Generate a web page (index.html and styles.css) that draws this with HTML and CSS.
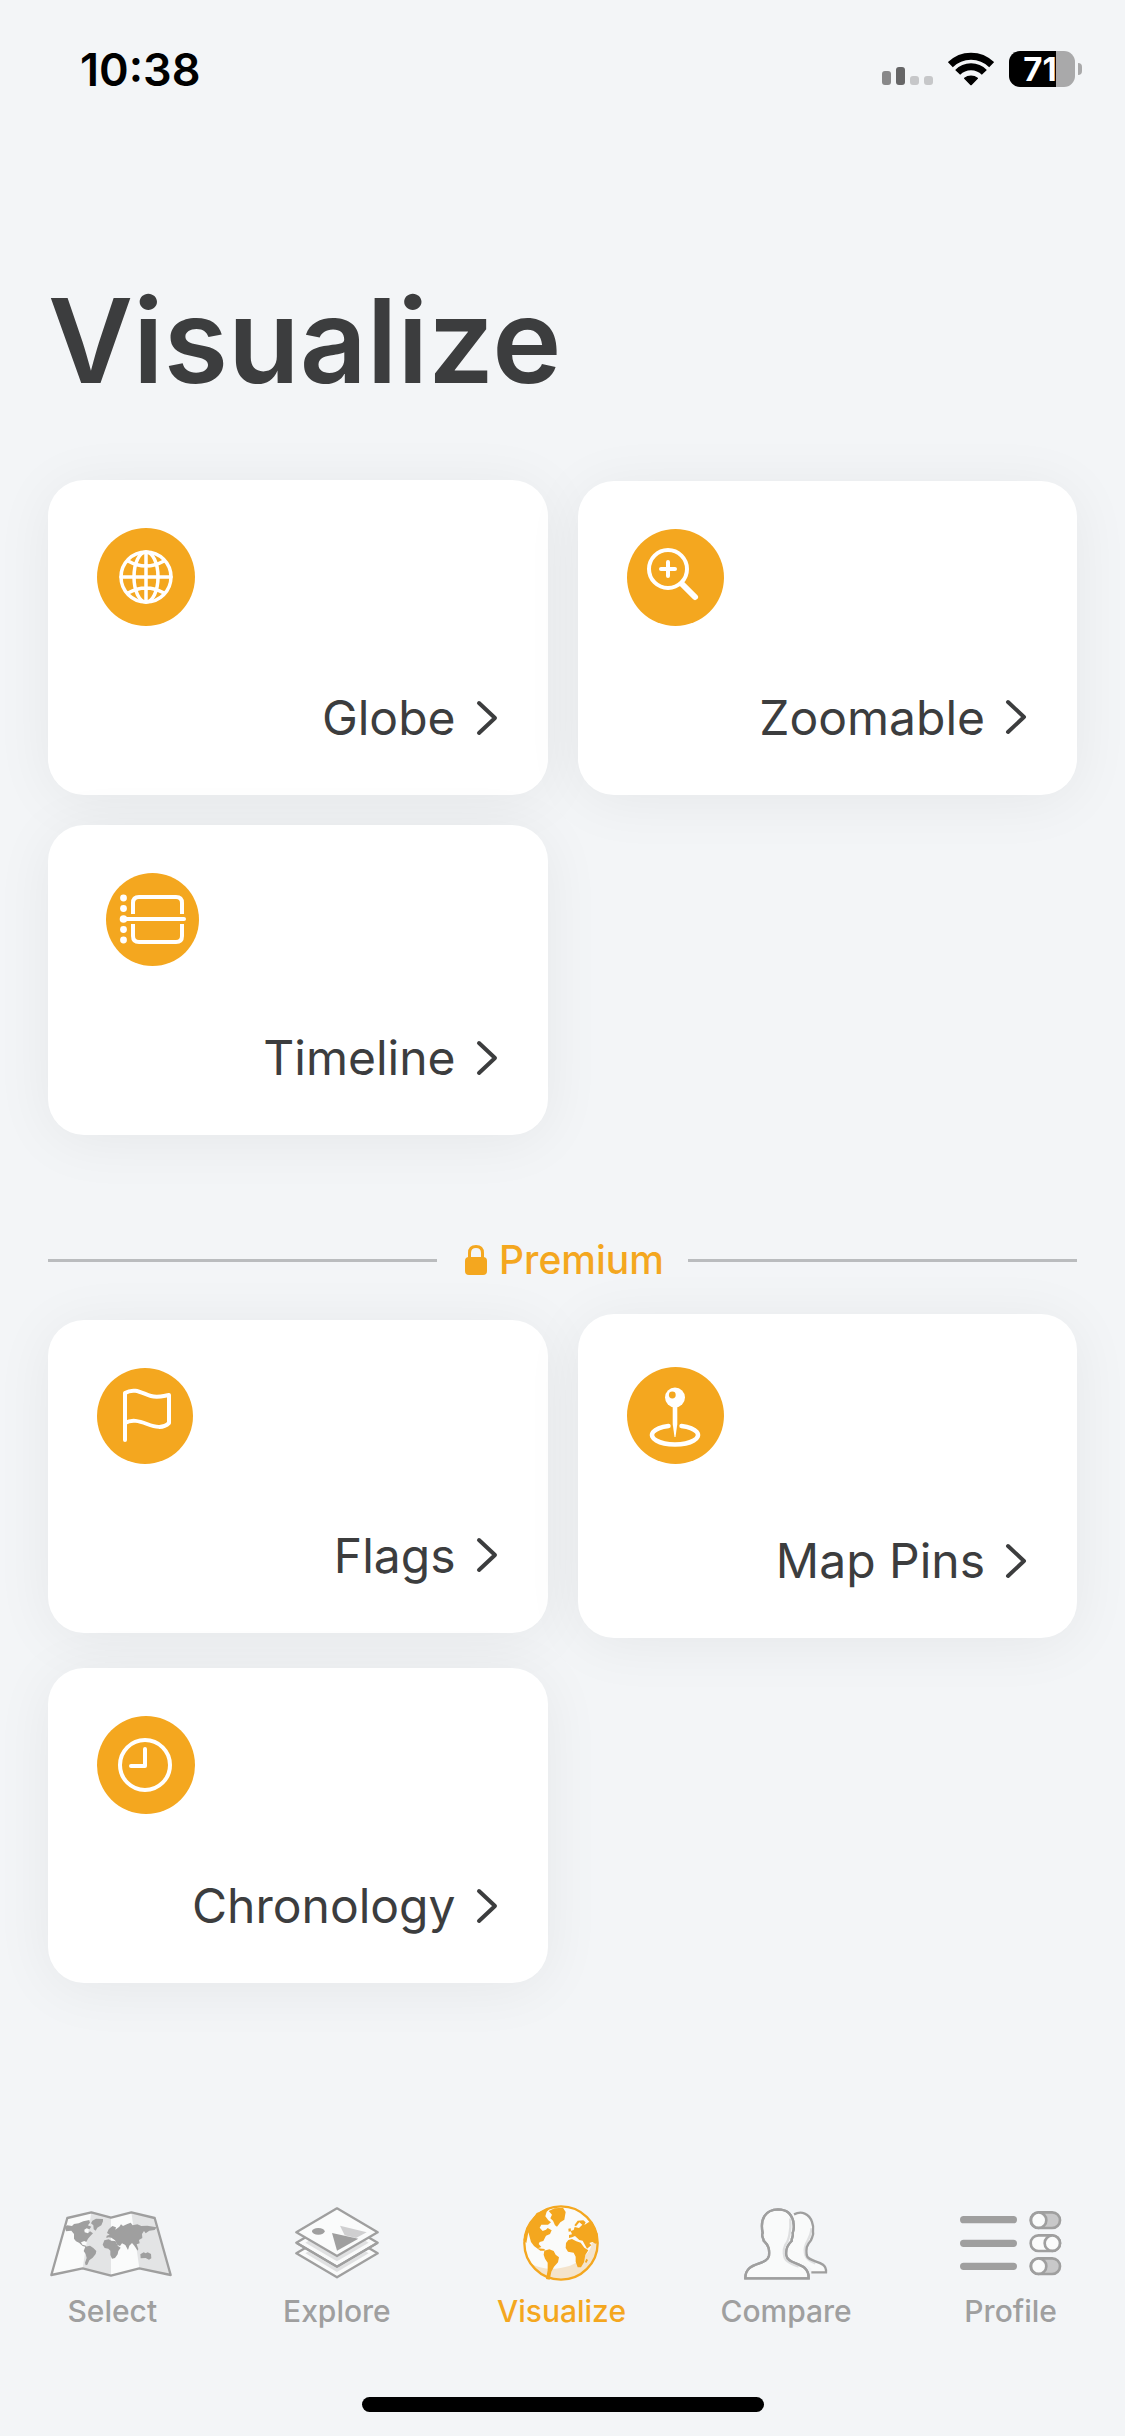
FILE: index.html
```html
<!DOCTYPE html>
<html lang="en">
<head>
    <meta charset="UTF-8">
    <meta name="viewport" content="width=device-width, initial-scale=1.0">
    <title>Visualize</title>
    <link rel="stylesheet" href="styles.css">
</head>
<body>
    <header class="status-bar">
        <span class="time">10:38</span>
        <div class="status-icons">
            <svg class="signal" viewBox="0 0 51 18" aria-hidden="true">
                <rect x="0" y="4" width="9" height="14" rx="3" fill="#888889"/>
                <rect x="14" y="0" width="9" height="18" rx="3" fill="#666667"/>
                <rect x="28" y="9" width="9" height="9" rx="3" fill="#c6c7c9"/>
                <rect x="42" y="9" width="9" height="9" rx="3" fill="#c6c7c9"/>
            </svg>
            <svg class="wifi" viewBox="264 65 138 102" aria-hidden="true">
                <path d="M271 103A88 88 0 0 1 395 103M293 126A56 56 0 0 1 373 126" fill="none" stroke="#000" stroke-width="21"/>
                <path d="M333 163L314 144A30 30 0 0 1 352 144Z" stroke="#000" stroke-width="4" stroke-linejoin="round"/>
            </svg>
            <div class="battery">
                <span class="battery-level">71</span>
                <span class="battery-cap"></span>
            </div>
        </div>
    </header>

    <main>
        <h1>Visualize</h1>

        <div class="cards">
            <a class="card" href="#globe">
                <svg class="card-icon" width="98" height="98" viewBox="0 0 98 98" aria-hidden="true">
                    <circle class="disc" cx="49" cy="49" r="49"/>
                    <g class="line" stroke-width="3.5">
                        <circle cx="49" cy="49" r="25"/>
                        <ellipse cx="49" cy="49" rx="12" ry="25"/>
                        <path d="M49 24V74M24 49H74M31 33Q49 43 67 33M31 65Q49 55 67 65"/>
                    </g>
                </svg>
                <span class="card-label">Globe
                    <svg class="chevron" viewBox="0 0 26 38" aria-hidden="true"><path d="M5 4L21 19L5 34"/></svg>
                </span>
            </a>
            <a class="card" href="#zoomable">
                <svg class="card-icon" width="97" height="97" viewBox="0 0 97 97" aria-hidden="true">
                    <circle class="disc" cx="48.5" cy="48.5" r="48.5"/>
                    <g class="line" stroke-width="4">
                        <circle cx="41" cy="40" r="19"/>
                        <path d="M34 40H48M41 33V47"/>
                        <path d="M55 55L68 68" stroke-width="6"/>
                    </g>
                </svg>
                <span class="card-label">Zoomable
                    <svg class="chevron" viewBox="0 0 26 38" aria-hidden="true"><path d="M5 4L21 19L5 34"/></svg>
                </span>
            </a>
            <a class="card" href="#timeline">
                <svg class="card-icon" width="102" height="93" viewBox="0 0 102 93" aria-hidden="true">
                    <circle class="disc" cx="55.5" cy="46.5" r="46.5"/>
                    <g class="dots">
                        <circle cx="26.5" cy="25" r="3.4"/>
                        <circle cx="26.5" cy="35.5" r="3.4"/>
                        <circle cx="26.5" cy="46" r="3.8"/>
                        <circle cx="26.5" cy="56.5" r="3.4"/>
                        <circle cx="26.5" cy="67" r="3.4"/>
                    </g>
                    <g class="line" stroke-width="4">
                        <path d="M27 46H87"/>
                        <path d="M36 41V30Q36 24 42 24H79Q85 24 85 30V41M36 51V63Q36 69 42 69H79Q85 69 85 63V51" stroke-linecap="butt"/>
                    </g>
                </svg>
                <span class="card-label">Timeline
                    <svg class="chevron" viewBox="0 0 26 38" aria-hidden="true"><path d="M5 4L21 19L5 34"/></svg>
                </span>
            </a>
        </div>

        <h2 class="divider">
            <svg class="lock" viewBox="0 0 22 30" aria-hidden="true">
                <rect x="0" y="12" width="22" height="18" rx="4" fill="#f4a71f"/>
                <path d="M4.5 14V8Q4.5 1.5 11 1.5T17.5 8V14" fill="none" stroke="#f4a71f" stroke-width="3"/>
            </svg>
            Premium
        </h2>

        <div class="cards">
            <a class="card" href="#flags">
                <svg class="card-icon" width="96" height="96" viewBox="0 0 96 96" aria-hidden="true">
                    <circle class="disc" cx="48" cy="48" r="48"/>
                    <path class="line" stroke-width="4" d="M28 72V25C38 19 46 26 54 28C61 30 66 28 72 27V55C66 61 58 59 50 56C42 53 35 51 28 55"/>
                </svg>
                <span class="card-label">Flags
                    <svg class="chevron" viewBox="0 0 26 38" aria-hidden="true"><path d="M5 4L21 19L5 34"/></svg>
                </span>
            </a>
            <a class="card" href="#map-pins">
                <svg class="card-icon" width="97" height="107" viewBox="0 0 97 107" aria-hidden="true">
                    <circle class="disc" cx="48.5" cy="53.5" r="48.5"/>
                    <path class="line" stroke-width="4.5" d="M41.5 63.9A23 9.5 0 1 0 54.5 63.9" stroke-linecap="butt"/>
                    <path d="M45.7 43H50.3V62L48.5 75H47.5L45.7 62Z" fill="#fff"/>
                    <circle cx="48" cy="35.5" r="10" fill="#fff"/>
                    <circle class="disc" cx="45.3" cy="33" r="3.4"/>
                </svg>
                <span class="card-label">Map Pins
                    <svg class="chevron" viewBox="0 0 26 38" aria-hidden="true"><path d="M5 4L21 19L5 34"/></svg>
                </span>
            </a>
            <a class="card" href="#chronology">
                <svg class="card-icon" width="98" height="98" viewBox="0 0 98 98" aria-hidden="true">
                    <circle class="disc" cx="49" cy="49" r="49"/>
                    <g class="line" stroke-width="4">
                        <circle cx="48" cy="49" r="25"/>
                        <path d="M48 33V50H34"/>
                    </g>
                </svg>
                <span class="card-label">Chronology
                    <svg class="chevron" viewBox="0 0 26 38" aria-hidden="true"><path d="M5 4L21 19L5 34"/></svg>
                </span>
            </a>
        </div>
    </main>

    <nav class="tab-bar">
        <a class="tab" href="#select">
            <span class="tab-icon">
                <svg width="124" height="68" viewBox="60 57 372 204" aria-hidden="true">
                    <path d="M112 84L184 67L243 83L304 67L374 84L422 255L328 235L243 257L158 235L64 255Z" fill="#fafbfb"/>
                    <path d="M184 67L243 83V257L158 235ZM304 67L374 84L422 255L328 235Z" fill="#e3e4e5"/>
                    <g fill="#9f9f9f">
                        <path d="M104 110L112 106L126 108L132 102L146 100L160 94L178 90L180 98L174 106L184 110L178 118L170 115L163 119L164 127L174 130L180 124L189 130L181 138L174 146L169 156L163 153L153 157L157 164L168 167L168 171L158 168L147 158L138 154L132 146L132 132L124 122L108 124Z"/>
                        <path d="M187 92L198 86L219 87L219 94L214 106L202 113L197 122L191 118L190 106L183 100Z"/>
                        <path d="M166 170L180 167L190 174L199 183L197 192L188 203L178 211L172 224L167 226L165 218L170 204L167 192L161 183Z"/>
                        <path d="M223 151L236 148L244 152L256 153L264 168L272 173L265 183L263 193L255 204L246 206L241 195L241 182L235 176L224 174L218 164Z"/>
                        <path d="M229 144L230 137L239 134L231 129L236 118L247 108L258 112L256 119L268 110L273 103L279 108L292 102L302 98L308 106L322 103L334 108L352 107L380 112L374 120L358 122L347 130L342 123L336 132L337 144L327 150L329 160L320 163L325 177L323 182L313 167L306 159L298 167L294 180L286 165L276 160L270 168L262 165L255 151L244 143L236 142Z"/>
                        <path d="M331 193L341 187L347 190L353 187L363 192L364 205L357 209L347 204L332 205Z"/>
                    </g>
                    <path d="M112 84L184 67L243 83L304 67L374 84L422 255L328 235L243 257L158 235L64 255Z" fill="none" stroke="#9f9f9f" stroke-width="7" stroke-linejoin="round"/>
                </svg>
            </span>
            Select
        </a>
        <a class="tab" href="#explore">
            <span class="tab-icon">
                <svg width="84" height="72" viewBox="795 54 252 216" aria-hidden="true">
                    <g fill="#fafbfb" stroke="#9f9f9f" stroke-width="7" stroke-linejoin="round">
                        <path d="M921 121L1043 193L921 265L799 193Z"/>
                        <path d="M921 89L1043 161L921 233L799 161Z"/>
                    </g>
                    <path d="M826 193L921 249L1016 193L1006 187L921 237L836 187Z" fill="#e0e1e2"/>
                    <path d="M826 161L921 217L1016 161L1006 155L921 205L836 155Z" fill="#e0e1e2"/>
                    <g fill="none" stroke="#9f9f9f" stroke-width="7" stroke-linejoin="round">
                        <path d="M799 161L921 233L1043 161"/>
                        <path d="M921 58L1043 130L921 201L799 130Z" fill="#fafbfb"/>
                    </g>
                    <ellipse cx="865" cy="127" rx="19" ry="10" fill="#9f9f9f"/>
                    <path d="M930 110L1010 130L978 147L944 139Z" fill="#cfcfd0"/>
                    <path d="M906 132L985 149L921 185Z" fill="#9f9f9f"/>
                </svg>
            </span>
            Explore
        </a>
        <a class="tab active" href="#visualize" aria-current="page">
            <span class="tab-icon">
                <svg width="76" height="76" viewBox="369 44 228 228" aria-hidden="true">
                    <circle cx="483" cy="158" r="110" fill="#fafbfa"/>
                    <path d="M396 222C430 240 470 238 510 226C550 210 575 180 575 158L592 158C592 215 545 268 483 268C445 268 415 250 396 222Z" fill="#f4e4cc"/>
                    <g fill="#f4a71f">
                        <path d="M455 50L440 64L436 78L445 90L453 96L444 103L424 103L419 112L428 122L438 118L443 113L455 120L450 131L438 136L430 152L419 155L416 161L424 170L414 174L434 176L434 181L421 181L402 167L393 155L385 126L379 158L370 150L380 112L410 68Z"/>
                        <path d="M446 62L464 54L489 52L497 65L493 88L481 96L471 109L465 105L459 91L451 84L456 73Z"/>
                        <path d="M433 181L448 177L461 182L467 193L477 201L474 216L462 229L454 244L449 268L438 266L443 240L443 217L435 205L431 193Z"/>
                        <path d="M505 149L516 146L529 153L542 157L553 172L565 180L556 194L552 216L543 231L533 231L527 214L527 199L521 187L504 184L497 173L498 158Z"/>
                        <path d="M507 143L507 134L516 132L512 122L521 119L524 110L537 113L547 103L538 96L528 108L523 105L533 91L550 90L557 96L553 104L567 95L578 97L593 130L594 158L586 160L577 155L568 158L574 165L561 175L548 151L538 149L525 137L516 141Z"/>
                        <path d="M505 115L512 114L513 123L506 124ZM559 205L564 209L559 218L555 215Z"/>
                    </g>
                    <circle cx="483" cy="158" r="110" fill="none" stroke="#f4a71f" stroke-width="7"/>
                </svg>
            </span>
            Visualize
        </a>
        <a class="tab" href="#compare">
            <span class="tab-icon">
                <svg width="84" height="73" viewBox="138 51 252 219" aria-hidden="true">
                    <g fill="none" stroke="#9f9f9f" stroke-width="7">
                        <path d="M284 70C335 54 350 90 345 125C349 137 340 143 339 151C325 167 324 175 326 195C330 220 388 208 384 247H340V235C320 220 280 218 264 200V175C285 150 290 140 287 110Z" fill="#f9fafa" stroke="none"/>
                        <path d="M340 115C340 145 320 155 320 180C320 210 340 215 352 220" stroke="#e0e1e2"/>
                        <path d="M288 73C310 62 334 70 342 96C347 108 346 118 345 125C349 137 340 143 339 151C325 167 324 175 326 195C330 220 388 208 384 247H340"/>
                        <path d="M240 58C203 59 185 85 194 129C189 139 197 144 197 152C212 167 215 177 213 197C206 230 141 212 142 265H332C333 212 270 228 265 197C262 178 268 165 281 153C280 143 287 140 284 129C291 113 286 104 286 94C279 68 265 59 240 58Z" fill="#f9fafa"/>
                        <path d="M277 85C279 120 273 152 262 164C254 180 257 202 264 210C274 221 290 225 302 230" stroke="#dedfe0"/>
                        <path d="M240 58C203 59 185 85 194 129C189 139 197 144 197 152C212 167 215 177 213 197C206 230 141 212 142 265H332C333 212 270 228 265 197C262 178 268 165 281 153C280 143 287 140 284 129C291 113 286 104 286 94C279 68 265 59 240 58Z"/>
                    </g>
                </svg>
            </span>
            Compare
        </a>
        <a class="tab" href="#profile">
            <span class="tab-icon">
                <svg width="102" height="66" viewBox="788 63 306 198" aria-hidden="true">
                    <path d="M799 92H948M799 163H948M799 232H948" stroke="#9f9f9f" stroke-width="22" stroke-linecap="round"/>
                    <g fill="#fafbfb" stroke="#9f9f9f" stroke-width="8">
                        <rect x="1000" y="70" width="88" height="47" rx="23.5" fill="#c8c8c9"/>
                        <circle cx="1024" cy="93.5" r="23"/>
                        <rect x="1000" y="139" width="88" height="47" rx="23.5"/>
                        <circle cx="1065" cy="162.5" r="23"/>
                        <rect x="1000" y="208" width="88" height="47" rx="23.5" fill="#c8c8c9"/>
                        <circle cx="1024" cy="231.5" r="23"/>
                    </g>
                </svg>
            </span>
            Profile
        </a>
    </nav>
    <div class="home-indicator"></div>
</body>
</html>
```
FILE: styles.css
```css
* {
    box-sizing: border-box;
}
body {
    display: flex;
    flex-direction: column;
    min-height: 100vh;
    margin: 0;
    background-color: #f3f5f7;
    color: #3c3d3e;
    font-family: Inter, "Liberation Sans", sans-serif;
}
a {
    color: inherit;
    text-decoration: none;
}
svg {
    display: block;
    flex-shrink: 0;
}

/* Status bar */
.status-bar {
    display: flex;
    justify-content: space-between;
    align-items: center;
    height: 138px;
    padding: 0 43px 0 80px;
    color: #000;
}
.time {
    font-size: 45px;
    font-weight: 600;
}
.status-icons {
    display: flex;
    align-items: center;
    gap: 15px;
}
.signal {
    width: 51px;
    height: 18px;
    margin-top: 14px;
}
.wifi {
    width: 46px;
    height: 34px;
}
.battery {
    display: flex;
    align-items: center;
    gap: 3px;
}
.battery-level {
    width: 66px;
    height: 36px;
    padding-right: 4px;
    border-radius: 11px;
    background: linear-gradient(to right, #000 71%, #a9a9aa 71%);
    color: #fff;
    font-size: 33px;
    font-weight: 700;
    line-height: 36px;
    text-align: center;
}
.battery-cap {
    width: 4px;
    height: 12px;
    border-radius: 0 4px 4px 0;
    background: #a9a9aa;
}

/* Content */
main {
    flex: 1;
    padding: 131px 48px 48px;
}
h1 {
    margin: 0 0 67px;
    font-size: 117px;
    font-weight: 600;
    line-height: 144px;
}
.cards {
    display: grid;
    grid-template-columns: 1fr 1fr;
    gap: 30px;
    align-items: center;
}
.card {
    display: flex;
    flex-direction: column;
    gap: 61px;
    padding: 48px 48px 47px 49px;
    background: #fff;
    border-radius: 36px;
    box-shadow: 0 6px 60px rgba(0, 0, 0, 0.06);
}
.card-label {
    display: flex;
    justify-content: flex-end;
    align-items: center;
    gap: 18px;
    font-size: 48px;
    line-height: 61px;
}
.chevron {
    width: 26px;
    height: 38px;
    fill: none;
    stroke: #3c3d3e;
    stroke-width: 4;
    stroke-linecap: round;
    stroke-linejoin: round;
}
.disc {
    fill: #f4a71f;
}
.dots {
    fill: #fff;
}
.line {
    fill: none;
    stroke: #fff;
    stroke-linecap: round;
    stroke-linejoin: round;
}
.divider {
    display: flex;
    align-items: center;
    gap: 12px;
    margin: 101px 0 30px;
    color: #f4a71f;
    font-size: 39px;
    font-weight: 500;
    line-height: 48px;
}
.divider::before,
.divider::after {
    content: "";
    flex: 1;
    height: 3px;
    background: #babcbe;
}
.divider::before {
    margin-right: 16px;
}
.divider::after {
    margin-left: 12px;
}
.lock {
    width: 22px;
    height: 30px;
}

/* Tab bar */
.tab-bar {
    display: flex;
    padding-right: 2px;
}
.tab {
    flex: 1;
    display: flex;
    flex-direction: column;
    align-items: center;
    gap: 12px;
    color: #9f9f9f;
    font-size: 30px;
    font-weight: 500;
    line-height: 36px;
}
.tab.active {
    color: #f4a71f;
}
.tab-icon {
    display: flex;
    align-items: center;
    height: 76px;
}
.home-indicator {
    width: 402px;
    height: 15px;
    margin: 68px auto 24px;
    border-radius: 8px;
    background: #000;
}
```
